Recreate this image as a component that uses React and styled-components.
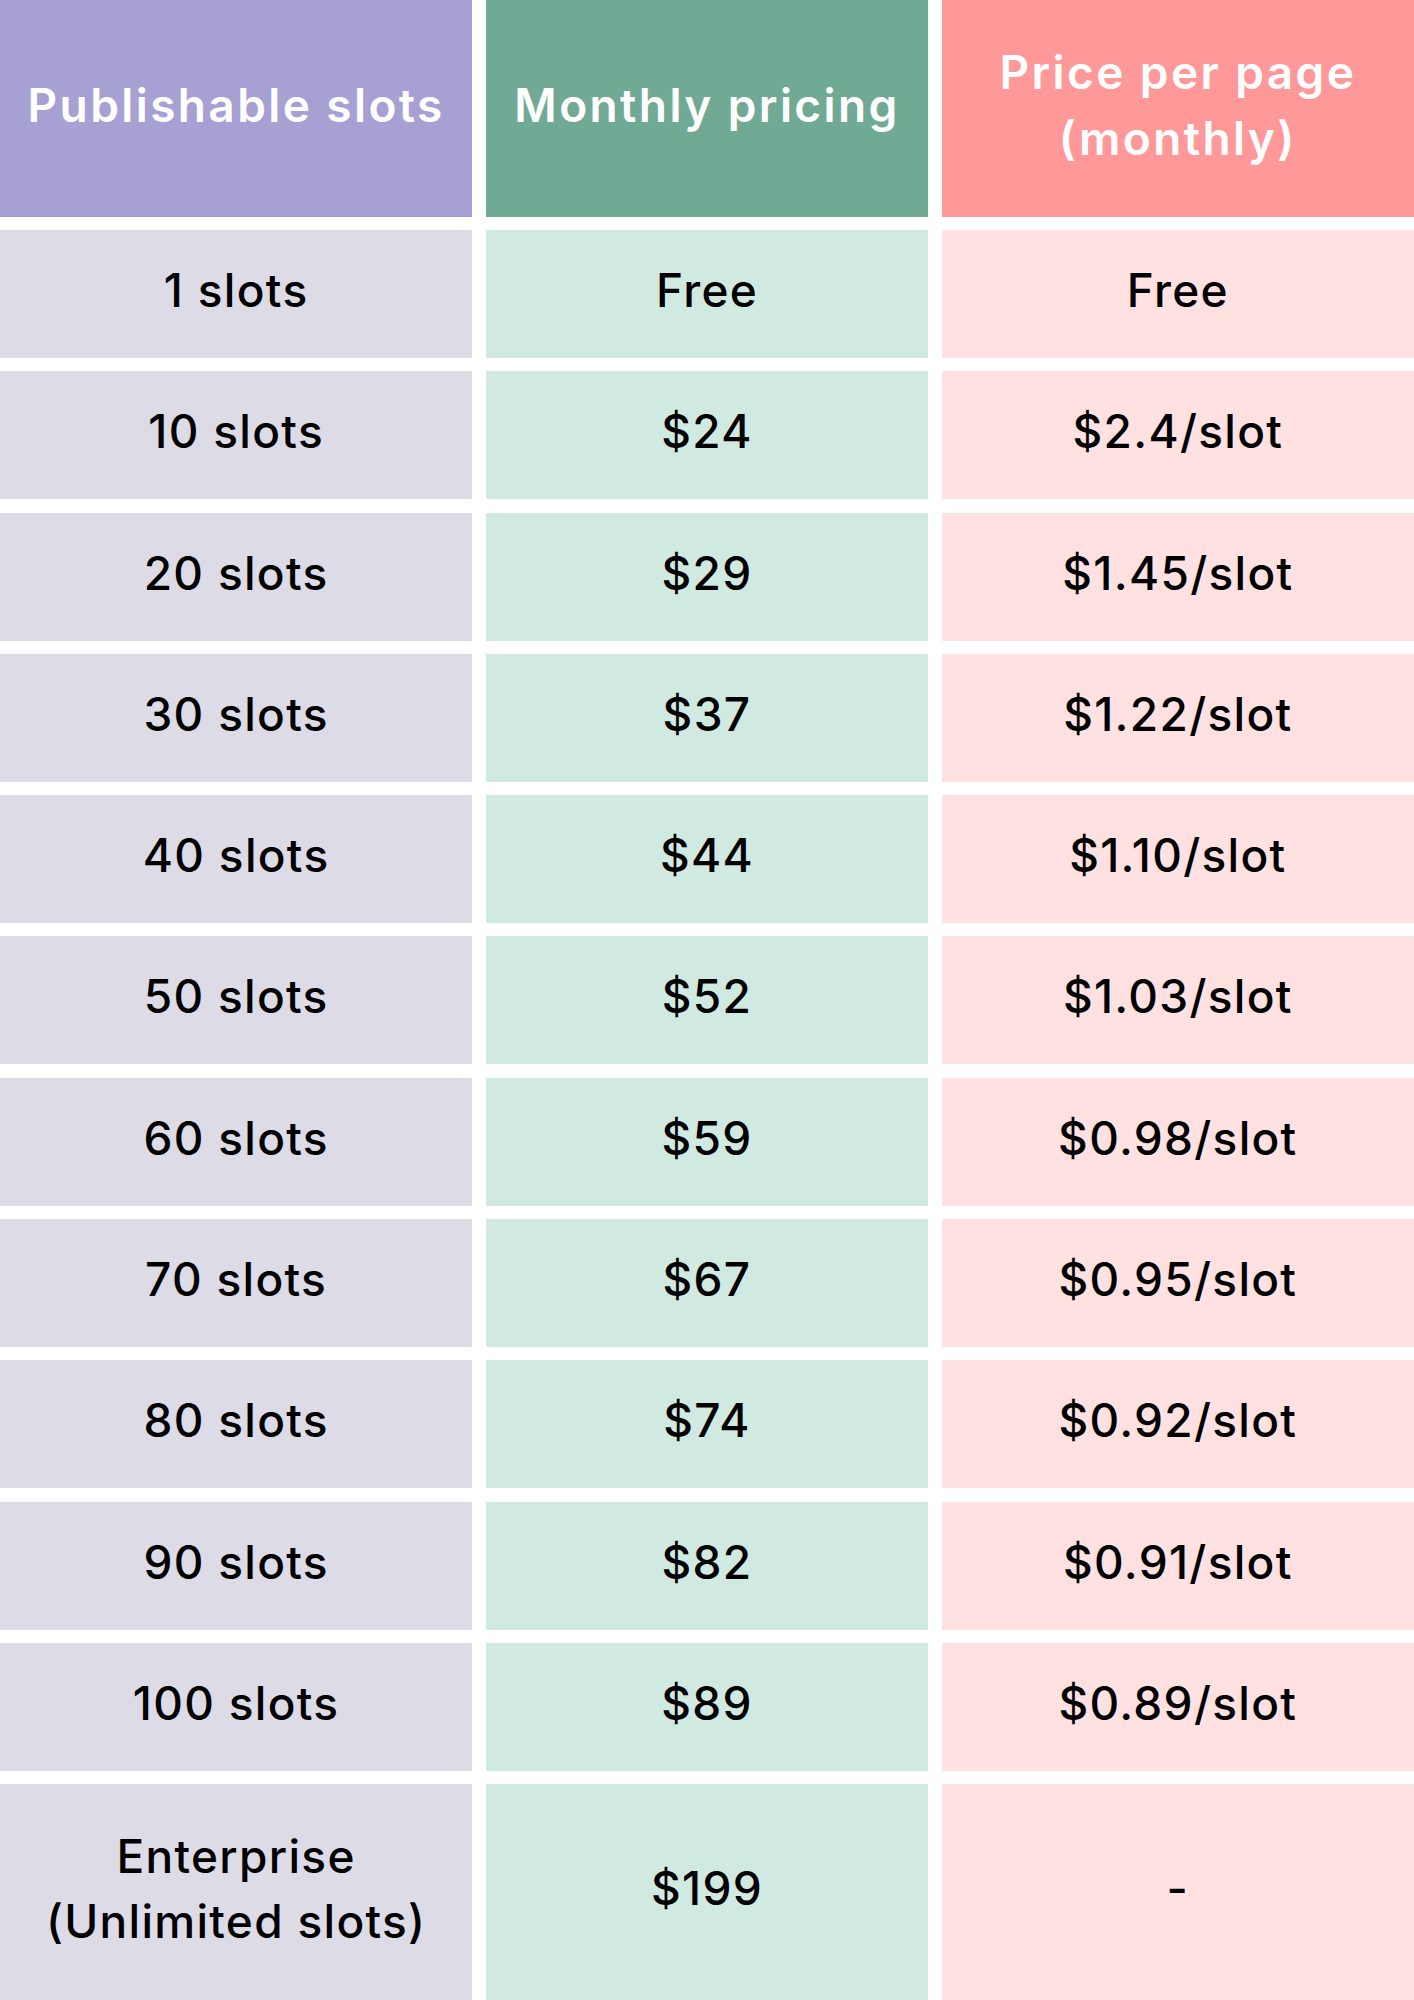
import React from "react";
import styled, { createGlobalStyle } from "styled-components";

const GlobalStyle = createGlobalStyle`
  html, body {
    margin: 0;
    padding: 0;
    background: #ffffff;
  }
  body {
    font-family: Inter, "Open Sans", "Liberation Sans", sans-serif;
  }
`;

const rows = [
  ["1 slots", "Free", "Free"],
  ["10 slots", "$24", "$2.4/slot"],
  ["20 slots", "$29", "$1.45/slot"],
  ["30 slots", "$37", "$1.22/slot"],
  ["40 slots", "$44", "$1.10/slot"],
  ["50 slots", "$52", "$1.03/slot"],
  ["60 slots", "$59", "$0.98/slot"],
  ["70 slots", "$67", "$0.95/slot"],
  ["80 slots", "$74", "$0.92/slot"],
  ["90 slots", "$82", "$0.91/slot"],
  ["100 slots", "$89", "$0.89/slot"],
];

const headColors = ["#a7a0d3", "#70aa95", "#ff9898"];
const cellColors = ["#dddbe6", "#d1eae1", "#ffe1e2"];

const App = () => {
  return (
    <React.Fragment>
      <GlobalStyle />
      <Table>
        <HeadCell bg={headColors[0]}>Publishable slots</HeadCell>
        <HeadCell bg={headColors[1]}>Monthly pricing</HeadCell>
        <HeadCell bg={headColors[2]}>
          Price per page
          <br />
          (monthly)
        </HeadCell>

        {rows.map((row) =>
          row.map((text, i) => (
            <Cell key={row[0] + i} bg={cellColors[i]}>
              {text}
            </Cell>
          ))
        )}

        <Cell bg={cellColors[0]}>
          Enterprise
          <br />
          (Unlimited slots)
        </Cell>
        <Cell bg={cellColors[1]}>$199</Cell>
        <Cell bg={cellColors[2]}>-</Cell>
      </Table>
    </React.Fragment>
  );
};

const Table = styled.div`
  display: grid;
  width: 1414px;
  height: 2000px;
  grid-template-columns: 472.3fr 442.6fr 472.3fr;
  grid-template-rows: 216.7px repeat(11, 128px) 1fr;
  gap: 13.3px 13.4px;
  background: #ffffff;
`;

const Cell = styled.div`
  display: flex;
  align-items: center;
  justify-content: center;
  text-align: center;
  padding-bottom: 7px;
  background: ${(p) => p.bg};
  color: #000000;
  font-size: 46px;
  font-weight: 500;
  letter-spacing: 1.3px;
  line-height: 65px;
`;

const HeadCell = styled(Cell)`
  color: #ffffff;
  font-weight: 600;
  letter-spacing: 2.4px;
  line-height: 66px;
`;

export default App;
